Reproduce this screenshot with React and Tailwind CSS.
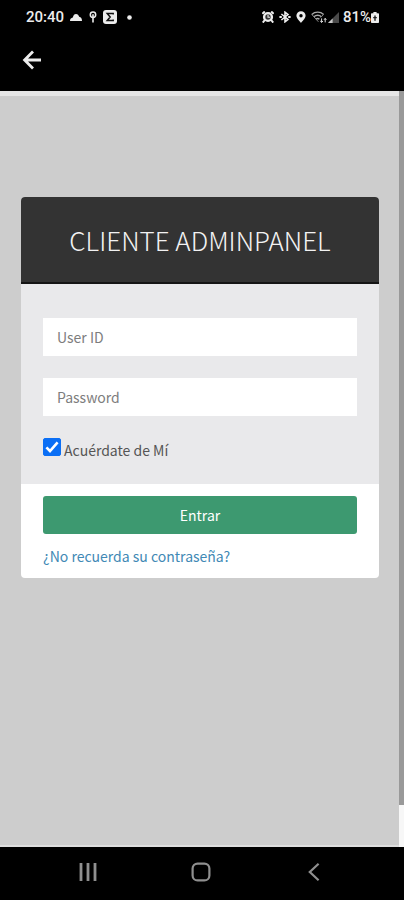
import React, { useState } from "react";

function StatusBar() {
  return (
    <div className="flex h-[34px] items-center justify-between pr-[25px] pl-[26px] font-['Roboto',sans-serif] text-[15px] font-medium text-[#ededed]">
      <div className="flex items-center">
        <span>20:40</span>
        <svg className="ml-1.5 h-2 w-3" viewBox="0 0 12 8" fill="currentColor">
          <path d="M0 8C0 5.6 1.3 4.8 2.8 4.4C3.4 2.2 4.4 1 6 1C7.7 1 8.6 2.1 9.2 3.8C11 4.2 12 5.6 12 8Z" />
        </svg>
        <svg className="ml-[7px] h-3 w-2" viewBox="0 0 8 12" fill="none" stroke="currentColor">
          <circle cx="4" cy="3.8" r="2.7" strokeWidth="1.5" />
          <path d="M4 3.2V11.6" strokeWidth="1.6" />
        </svg>
        <svg className="ml-1.5 size-3.5" viewBox="0 0 14 14">
          <rect width="14" height="14" rx="3" fill="currentColor" />
          <path d="M10.2 4.6V3.4H4.2L7.2 7L4.2 10.6H10.2V9.4" fill="none" stroke="#111" strokeWidth="1.5" />
        </svg>
        <svg className="ml-2.5 size-[5px]" viewBox="0 0 5 5" fill="currentColor">
          <circle cx="2.5" cy="2.5" r="2.3" />
        </svg>
      </div>
      <div className="flex items-center">
        <svg className="size-3" viewBox="0 0 12 12">
          <circle cx="6" cy="6" r="3.9" fill="#333" stroke="currentColor" strokeWidth="2.4" />
          <path d="M.4 2.8L2.8 .5M9.2 .5L11.6 2.8M2.8 9L.8 11.6M9.2 9L11.2 11.6" stroke="currentColor" strokeWidth="2" />
          <path d="M6 3.8V6.3H8" fill="none" stroke="currentColor" strokeWidth="1.1" />
        </svg>
        <svg className="ml-[5px] h-3 w-3" viewBox="0 0 12 12" fill="none" stroke="currentColor" strokeWidth="1.6">
          <path d="M2.4 3L9 8.4L6 10.8V1.2L9 3.6L2.4 9" />
          <path d="M.4 6H2.8M9.2 6H11.6" strokeWidth="2" />
        </svg>
        <svg className="ml-[5px] h-3 w-2.5" viewBox="0 0 10 12">
          <path fill="currentColor" fillRule="evenodd" d="M5 .2A4.6 4.6 0 0 0 .4 4.8C.4 7.5 5 11.9 5 11.9S9.6 7.5 9.6 4.8A4.6 4.6 0 0 0 5 .2ZM5 3A1.7 1.7 0 1 1 5 6.4A1.7 1.7 0 1 1 5 3Z" />
        </svg>
        <svg className="ml-[5px] h-3 w-4" viewBox="0 0 16 12" fill="none">
          <path d="M.8 3.4C4 .4 9.4 .4 12.6 3.4M3 5.8C5 3.8 8.4 3.8 10.4 5.8M5 8.2C6 7.2 7.4 7.2 8.4 8.2" stroke="#a8a8a8" strokeWidth="1.4" />
          <path d="M.8 3.4L7.4 10.8M12.6 3.4L9.6 6.6" stroke="#888" />
          <path d="M10.6 7.4V11.4M9.2 10L10.6 11.4L12 10M14.2 11.4V7.4M13 8.8L14.2 7.4L15.4 8.8" stroke="#ddd" />
        </svg>
        <svg className="ml-px h-[11px] w-[11px]" viewBox="0 0 11 11">
          <path d="M0 11L11 0V11Z" fill="#4a4a4a" />
          <path d="M0 11L4.6 6.4V11Z" fill="#c8c8c8" />
        </svg>
        <span className="ml-1">81%</span>
        <svg className="h-[11px] w-2" viewBox="0 0 8 11">
          <path fill="currentColor" d="M2.4 0H5.6V1.2H7.2Q8 1.2 8 2V10.2Q8 11 7.2 11H.8Q0 11 0 10.2V2Q0 1.2 .8 1.2H2.4Z" />
          <path d="M4 3.4V8.8M2.2 5.6H5.8" stroke="#222" strokeWidth="1.4" />
        </svg>
      </div>
    </div>
  );
}

function AppBar() {
  return (
    <header className="flex h-[57px] items-start px-[22px] pt-4">
      <button type="button" aria-label="Volver" className="text-[#ededed]">
        <svg className="size-5" viewBox="0 0 20 20" fill="none" stroke="currentColor" strokeWidth="2.8">
          <path d="M19 10H2.6M11 1.6L2.6 10L11 18.4" />
        </svg>
      </button>
    </header>
  );
}

function LoginCard() {
  const [remember, setRemember] = useState(true);

  return (
    <form
      onSubmit={(e) => e.preventDefault()}
      className="overflow-hidden rounded-[4px] bg-white text-[14px] leading-5 text-[#555]"
    >
      <h1 className="flex h-[87px] items-center justify-center border-b-2 border-[#151515] bg-[#333] text-[26px] font-light text-[#f2f2f2]">
        CLIENTE ADMINPANEL
      </h1>
      <div className="flex flex-col bg-[#e9e9eb] px-[22px] pt-[34px] pb-6">
        <input
          type="text"
          aria-label="User ID"
          placeholder="User ID"
          className="h-[38px] w-full bg-white px-3.5 outline-none placeholder:text-[#7d7d7d]"
        />
        <input
          type="password"
          aria-label="Password"
          placeholder="Password"
          className="mt-[22px] h-[38px] w-full bg-white px-3.5 outline-none placeholder:text-[#7d7d7d]"
        />
        <label className="mt-[22px] flex gap-[3px]">
          <span className="relative size-[18px]">
            <input
              type="checkbox"
              checked={remember}
              onChange={(e) => setRemember(e.target.checked)}
              className="peer block size-[18px] appearance-none rounded-[2px] border border-[#767676] bg-white checked:border-[#0b6ff5] checked:bg-[#0b6ff5]"
            />
            <svg
              className="pointer-events-none absolute inset-0 hidden size-[18px] peer-checked:block"
              viewBox="0 0 18 18"
              fill="none"
              stroke="#fff"
              strokeWidth="2.6"
            >
              <path d="M3.4 9.4L7 13L14.6 4.4" />
            </svg>
          </span>
          <span className="pt-0.5">Acuérdate de Mí</span>
        </label>
      </div>
      <div className="px-[22px] pt-3 pb-3">
        <button type="submit" className="h-[38px] w-full rounded-[3px] bg-[#3d9970] text-white">
          Entrar
        </button>
        <a href="#" className="mt-3 block text-[#4189b5]">
          ¿No recuerda su contraseña?
        </a>
      </div>
    </form>
  );
}

function NavBar() {
  return (
    <nav className="grid h-[53px] grid-cols-3 place-items-center pr-[34px] pb-[3px] pl-[31px] text-[#8f8f8f]">
      <button type="button" aria-label="Recientes">
        <svg className="size-[18px]" viewBox="0 0 18 18" stroke="currentColor" strokeWidth="2.8">
          <path d="M2 0V18M9 0V18M16 0V18" />
        </svg>
      </button>
      <button type="button" aria-label="Inicio">
        <svg className="size-5" viewBox="0 0 20 20" fill="none" stroke="currentColor" strokeWidth="2.2">
          <rect x="1.6" y="1.6" width="16.8" height="16.8" rx="5" />
        </svg>
      </button>
      <button type="button" aria-label="Atrás">
        <svg className="h-[18px] w-3" viewBox="0 0 12 18" fill="none" stroke="currentColor" strokeWidth="2.2">
          <path d="M10.6 .8L1.8 9L10.6 17.2" />
        </svg>
      </button>
    </nav>
  );
}

export default function App() {
  return (
    <div className="flex min-h-screen flex-col bg-black font-['Noto_Sans_CJK_SC',sans-serif]">
      <StatusBar />
      <AppBar />
      <div className="flex flex-1">
        <main className="flex-1 border-t-[5px] border-b-2 border-t-[#e6e6e6] border-b-[#dedede] bg-[#cdcdcd] pt-[101px] pr-5 pl-[21px]">
          <LoginCard />
        </main>
        <div className="flex w-[5px] flex-col bg-[#f7f7f7] pb-[42px]">
          <div className="flex-1 bg-[#999]" />
        </div>
      </div>
      <NavBar />
    </div>
  );
}
